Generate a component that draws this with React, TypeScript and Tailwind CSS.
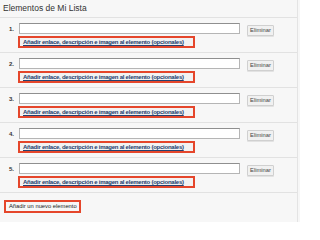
const items = [1, 2, 3, 4, 5];

function Row({ n }: { n: number }) {
  return (
    <div className="border-b border-[#e2e2e2] pt-[5px] pb-[4px]">
      <div className="flex h-[11px] items-start">
        <span className="mt-[3px] w-[19px] pr-[5px] text-right text-[6px] font-bold leading-none text-[#333]">
          {n}.
        </span>
        <input
          type="text"
          className="h-[11px] w-[221px] border border-[#b5b5b5] border-t-[#8f8f8f] bg-white outline-none"
        />
        <button className="ml-[7px] mt-[2px] h-[11px] w-[27px] shrink-0 rounded-[1px] border border-[#d0d0d0] bg-[#f1f1f1] text-[5.8px] leading-none text-[#444] shadow-[0_1px_0_#e2e2e2]">
          Eliminar
        </button>
      </div>
      <div className="ml-[18px] mt-[2px] flex h-[12px] w-[177px] items-center border-2 border-[#e5462b] bg-[#f2f2f2] pl-[3px]">
        <a
          href="#"
          className="whitespace-nowrap text-[6px] font-bold leading-none tracking-[-0.25px] text-[#24406e] underline decoration-[0.5px] underline-offset-[1px]"
        >
          Añadir enlace, descripción e imagen al elemento (opcionales)
        </a>
      </div>
    </div>
  );
}

export default function App() {
  return (
    <div
      className="h-[222px] w-[300px] overflow-hidden bg-[#f7f7f7]"
      style={{ fontFamily: '"Liberation Sans", Arial, sans-serif' }}
    >
      <div className="h-full w-[298px] border-r border-[#e4e4e4]">
        <h2 className="h-[18px] border-b border-[#e2e2e2] pl-[3px] pt-[4px] text-[8.5px] leading-none text-[#333]">
          Elementos de Mi Lista
        </h2>
        {items.map((n) => (
          <Row key={n} n={n} />
        ))}
        <div className="ml-[4px] mt-[7px] flex h-[13px] w-[77px] items-center border-2 border-[#e5462b] pl-[3px]">
          <span className="whitespace-nowrap text-[5.8px] leading-none text-[#222]">
            Añadir un nuevo elemento
          </span>
        </div>
      </div>
    </div>
  );
}
